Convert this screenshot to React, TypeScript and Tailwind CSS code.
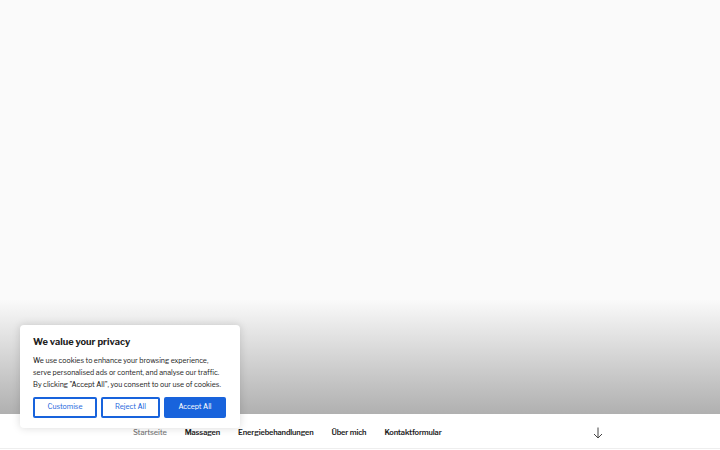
import React from "react";

const font = { fontFamily: '"Libre Franklin", Lato, "Liberation Sans", sans-serif' };

function ArrowDown() {
  return (
    <svg width="10" height="12" viewBox="0 0 10 12" fill="none" stroke="#444" strokeWidth="1">
      <path d="M5 0.5v10.5" />
      <path d="M1 7l4 4 4-4" />
    </svg>
  );
}

export default function App() {
  const nav = ["Massagen", "Energiebehandlungen", "Über mich", "Kontaktformular"];
  return (
    <div className="relative w-[720px] h-[450px] overflow-hidden bg-white" style={font}>
      {/* header image area */}
      <div className="h-[414px] flex flex-col">
        <div className="h-[300px] bg-[#fafafa]" />
        <div className="flex-1 bg-gradient-to-b from-[#fafafa] to-[#b0b0b0]" />
      </div>
      {/* navigation */}
      <nav className="h-[35px] border-b border-[#eeeeee] bg-white flex items-center pt-[3px]">
        <ul className="flex items-center gap-[18px] pl-[133px] text-[7.5px] tracking-[-0.15px] font-semibold text-[#222]">
          <li className="text-[#767676] font-medium">Startseite</li>
          {nav.map((n) => (
            <li key={n}>{n}</li>
          ))}
        </ul>
        <div className="ml-auto mr-[117px] flex items-center">
          <ArrowDown />
        </div>
      </nav>

      {/* cookie consent */}
      <div className="absolute left-[20px] top-[325px] w-[220px] bg-white rounded-[4px] shadow-[0_0_8px_rgba(0,0,0,0.15)] px-[13px] pt-[10px] pb-[10px] text-[#212121]">
        <p className="text-[9.3px] font-bold leading-[14px]">We value your privacy</p>
        <p className="mt-[6px] text-[7px] leading-[12px]">
          We use cookies to enhance your browsing experience, serve personalised ads or content, and analyse our traffic. By clicking "Accept All", you consent to our use of cookies.
        </p>
        <div className="mt-[6px] flex gap-[4px]">
          <button className="w-[64px] h-[21px] border-2 border-[#1863dc] text-[#1863dc] text-[7px] rounded-[2px] bg-white">Customise</button>
          <button className="w-[59px] h-[21px] border-2 border-[#1863dc] text-[#1863dc] text-[7px] rounded-[2px] bg-white">Reject All</button>
          <button className="w-[62px] h-[21px] border-2 border-[#1863dc] bg-[#1863dc] text-white text-[7px] rounded-[2px]">Accept All</button>
        </div>
      </div>
    </div>
  );
}
